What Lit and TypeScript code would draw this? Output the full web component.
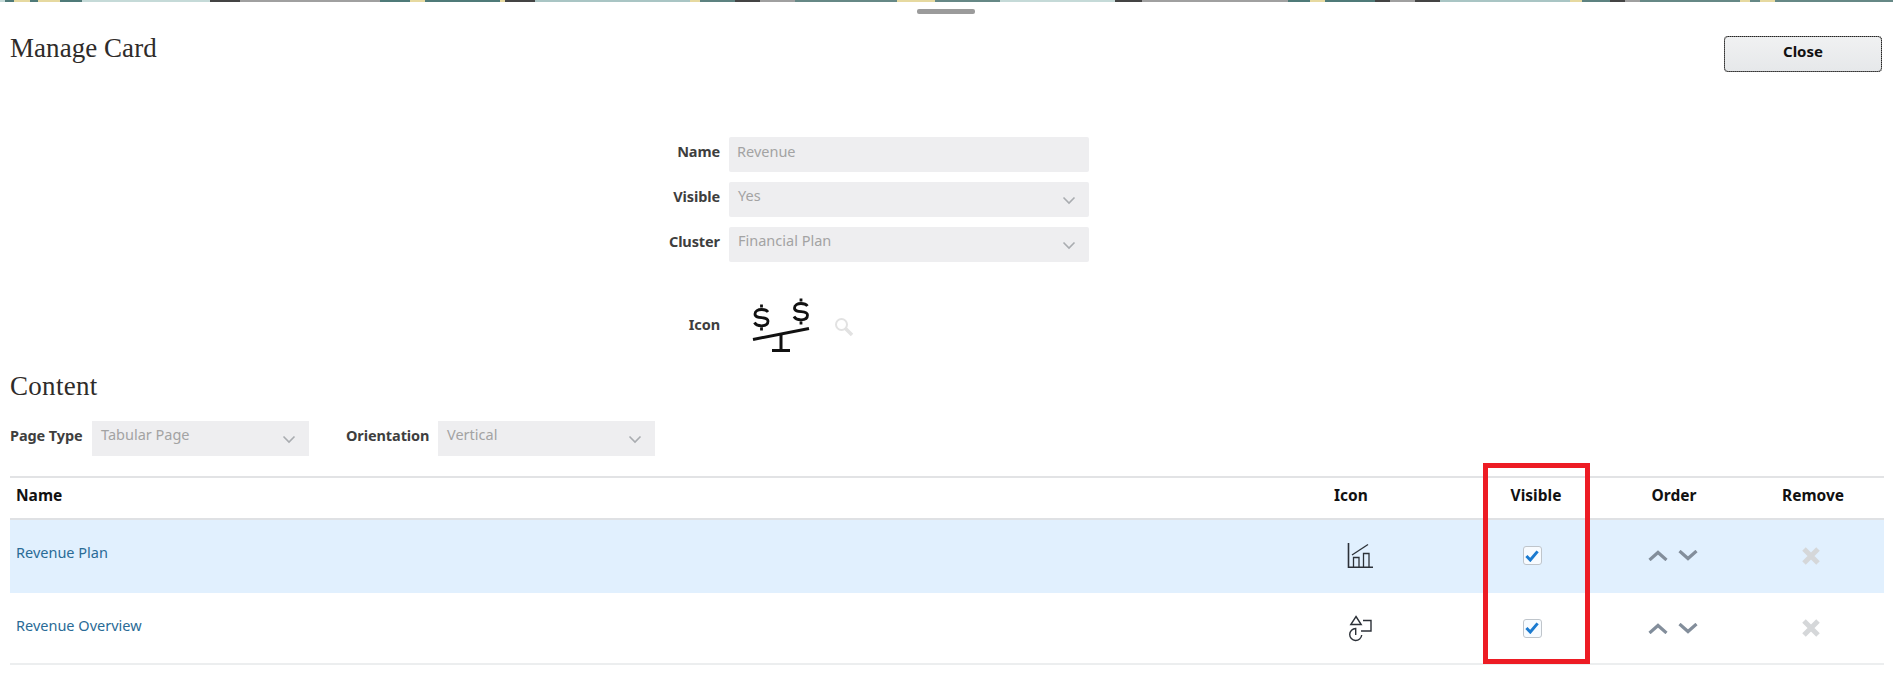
import { LitElement, html, css } from "lit";
import { customElement } from "lit/decorators.js";

const chevron = html`<svg class="chev" width="14" height="9" viewBox="0 0 14 9"><path d="M1.5 1.5 7 7l5.5-5.5" fill="none" stroke="#a9acb0" stroke-width="1.6"/></svg>`;

const chartIcon = html`<svg width="26" height="26" viewBox="0 0 26 26" fill="none" stroke="#2c3138" stroke-width="1.3"><path d="M1.5 0v24.200H26" stroke-width="1.6"/><path d="M5 12 21 1.500"/><path d="M6.500 24V14.500h5.500V24M16.500 24V10.500h5.500V24"/></svg>`;

const shapesIcon = html`<svg width="23" height="27" viewBox="0 0 23 27" fill="none" stroke="#2c3138" stroke-width="1.4"><path d="M7 1.500 12.200 9.500H1.800Z"/><path d="M14 5.500H22V16H12"/><path d="M12.700 20a6 6 0 1 1-6-6.500V20"/></svg>`;

function select(value: string) {
  return html`<div class="field select"><span>${value}</span>${chevron}</div>`;
}

function arrows() {
  return html`<div class="arrows">
    <svg width="20" height="11" viewBox="0 0 20 11"><path d="M1.500 10 10 2.500 18.500 10" fill="none" stroke="#838e9b" stroke-width="3.200"/></svg>
    <svg width="20" height="11" viewBox="0 0 20 11"><path d="M1.500 1 10 8.500 18.500 1" fill="none" stroke="#838e9b" stroke-width="3.200"/></svg>
  </div>`;
}

const cross = html`<svg width="20" height="20" viewBox="0 0 20 20"><path d="M3 3 17 17M17 3 3 17" stroke="#d5d7d9" stroke-width="5"/></svg>`;

const check = html`<div class="check"><svg width="14" height="12" viewBox="0 0 14 12"><path d="M1.400 6 5.300 10 12.600 1.400" fill="none" stroke="#1a7ad0" stroke-width="3"/></svg></div>`;

const dollar = "M17 12C15.500 10 13 9.500 10.500 9.500C7 9.500 4 11 4 14C4 20 17 15.500 17 21C17 24.500 14 25.800 10.500 25.800C7 25.800 4.500 24.500 3.500 22.500M10.500 4.500V7.500M10.500 27.500V30.500";

@customElement("app-root")
export class AppRoot extends LitElement {
  static styles = css`
    :host { display: block; height: 673px; background: #fff; position: relative; overflow: hidden; font-family: "Noto Sans", sans-serif; color: #3e3e3e; }
    .strip { height: 2px; background: linear-gradient(90deg,
      #c5dad8 0 5px, #4f7a78 5px 14px, #e6d9a0 14px 30px, #4f7a78 30px 38px, #e6d9a0 38px 60px, #4f7a78 60px 82px,
      #c5dad8 82px 210px, #444 210px 240px, #a0a0a0 240px 380px, #4f7a78 380px 410px, #e6d9a0 410px 425px, #4f7a78 425px 500px,
      #e6d9a0 500px 505px, #444 505px 535px, #a9c5c4 535px 690px, #e6d9a0 690px 700px, #5d8280 700px 735px, #444 735px 760px,
      #a0a0a0 760px 795px, #668886 795px 897px, #e6d9a0 897px 935px, #668886 935px 1000px,
      #c5dad8 1000px 1115px, #444 1115px 1142px, #a0a0a0 1142px 1288px, #4f7a78 1288px 1310px, #e6d9a0 1310px 1325px, #4f7a78 1325px 1375px,
      #444 1375px 1390px, #a0a0a0 1390px 1415px, #444 1415px 1440px, #a9c5c4 1440px 1570px, #e6d9a0 1570px 1582px, #5d8280 1582px 1610px,
      #444 1610px 1625px, #a0a0a0 1625px 1640px, #668886 1640px 1740px, #e6d9a0 1740px 1750px, #668886 1750px 1760px, #e6d9a0 1760px 1775px,
      #668886 1775px 1893px, #fff 1893px); }
    .handle-row { display: flex; justify-content: center; height: 19px; padding-top: 7px; box-sizing: border-box; padding-right: 5px; }
    .handle { width: 58px; height: 5px; border-radius: 2px; background: #9b9b9b; }
    .page { padding: 0 13px 0 10px; }
    .top { display: flex; justify-content: space-between; align-items: flex-start; height: 116px; }
    h2 { margin: 0; font: 400 27px/1 "Liberation Serif", serif; color: #2f2c2a; letter-spacing: 0.05px; }
    .title { padding-top: 14px; }
    .close { margin: 15px 2px 0 0; width: 158px; height: 36px; box-sizing: border-box; font: 700 15px "Noto Sans", sans-serif; color: #111; border: 1px solid #7d7d7d; border-radius: 4px; background: linear-gradient(#f0f1f2, #e6e8ea); outline: 1px dotted #222; outline-offset: -1px; padding: 0 0 6px; }
    .form { display: grid; grid-template-columns: 719px 360px; row-gap: 10px; align-items: center; }
    .lbl { font-weight: 700; font-size: 14.500px; color: #3e3e3e; letter-spacing: -0.1px; }
    .form .lbl { text-align: right; padding-right: 9px; padding-bottom: 8px; }
    .field { height: 35px; background: #eeeef0; border-radius: 2px; box-sizing: border-box; color: #a3a3a3; font-size: 14.500px; display: flex; align-items: flex-start; padding: 4px 8px 0; }
    .select { justify-content: space-between; padding: 3px 8px 0 9px; }
    .chev { margin-top: 11px; margin-right: 5px; }
    .icon-form { margin-top: 38px; }
    .icon-form .lbl { padding-bottom: 13px; }
    .icon-cell { display: flex; align-items: flex-start; height: 60px; padding-left: 22px; }
    .scale { overflow: visible; }
    .mag { margin: 17px 0 0 23px; }
    .content-h { margin-top: 13px; height: 34px; letter-spacing: 0.3px; }
    .types { display: flex; align-items: center; margin-top: 14px; }
    .types .lbl { width: 82px; flex: none; padding-bottom: 8px; }
    .types .field { width: 217px; border-radius: 0; }
    .types .lbl.second { margin-left: 37px; width: 92px; }
    .table { margin-top: 20px; border-top: 2px solid #e2e3e5; }
    .tr { display: grid; grid-template-columns: 1253px 194px 150px 131px 146px; align-items: center; }
    .th { height: 40px; border-bottom: 2px solid #dfe1e4; font-weight: 700; font-size: 15.500px; color: #111; }
    .th > div { padding-bottom: 6px; box-sizing: border-box; }
    .th .h-icon { padding-right: 18px; }
    .th .h-vis { padding-left: 8px; }
    .th .h-ord { padding-left: 3px; }
    .th .h-rem { padding-left: 4px; }
    .row { height: 73px; box-sizing: border-box; padding-bottom: 2px; }
    .row.sel { background: #e1f0fe; }
    .row.last { height: 72px; padding-bottom: 0; border-bottom: 2px solid #eceeef; }
    .c { display: flex; justify-content: center; }
    .n { padding-left: 6px; }
    .link { font-size: 14.500px; color: #2a6b96; padding-left: 6px; padding-bottom: 7px; }
    .check { width: 19px; height: 19px; box-sizing: border-box; border: 1px solid #bfc5cb; border-radius: 3px; background: #f7fbff; display: flex; align-items: center; justify-content: center; }
    .arrows { display: flex; gap: 10px; }
    .redbox { position: absolute; left: 1483px; top: 463px; width: 107px; height: 201px; box-sizing: border-box; border: 5px solid #ed1c24; }
  `;

  private row(name: string, icon: unknown, cls: string) {
    return html`<div class="tr row ${cls}">
      <div class="link">${name}</div>
      <div class="c">${icon}</div>
      <div class="c">${check}</div>
      <div class="c">${arrows()}</div>
      <div class="c">${cross}</div>
    </div>`;
  }

  render() {
    return html`
      <div class="strip"></div>
      <div class="handle-row"><div class="handle"></div></div>
      <div class="page">
        <div class="top">
          <h2 class="title">Manage Card</h2>
          <button class="close">Close</button>
        </div>
        <div class="form">
          <div class="lbl">Name</div><div class="field">Revenue</div>
          <div class="lbl">Visible</div>${select("Yes")}
          <div class="lbl">Cluster</div>${select("Financial Plan")}
        </div>
        <div class="form icon-form">
          <div class="lbl">Icon</div>
          <div class="icon-cell">
            <svg class="scale" width="60" height="60" viewBox="0 0 60 60" fill="none" stroke="#111">
              <path d="M2 39.500 58 28.500" stroke-width="3"/>
              <path d="M30 34V50M21 50.500H39" stroke-width="3"/>
              <path d=${dollar} stroke-width="2.800"/>
              <path d=${dollar} stroke-width="2.800" transform="translate(39.500 -6)"/>
            </svg>
            <svg class="mag" width="20" height="20" viewBox="0 0 20 20" fill="none" stroke="#e2e2e2"><circle cx="7.500" cy="7.500" r="5.500" stroke-width="2"/><path d="M11.500 11.500 18 18" stroke-width="3.500"/></svg>
          </div>
        </div>
        <h2 class="content-h">Content</h2>
        <div class="types">
          <div class="lbl">Page Type</div>${select("Tabular Page")}
          <div class="lbl second">Orientation</div>${select("Vertical")}
        </div>
        <div class="table">
          <div class="tr th">
            <div class="n">Name</div><div class="c h-icon">Icon</div><div class="c h-vis">Visible</div><div class="c h-ord">Order</div><div class="c h-rem">Remove</div>
          </div>
          ${this.row("Revenue Plan", chartIcon, "sel")}
          ${this.row("Revenue Overview", shapesIcon, "last")}
        </div>
      </div>
      <div class="redbox"></div>
    `;
  }
}
